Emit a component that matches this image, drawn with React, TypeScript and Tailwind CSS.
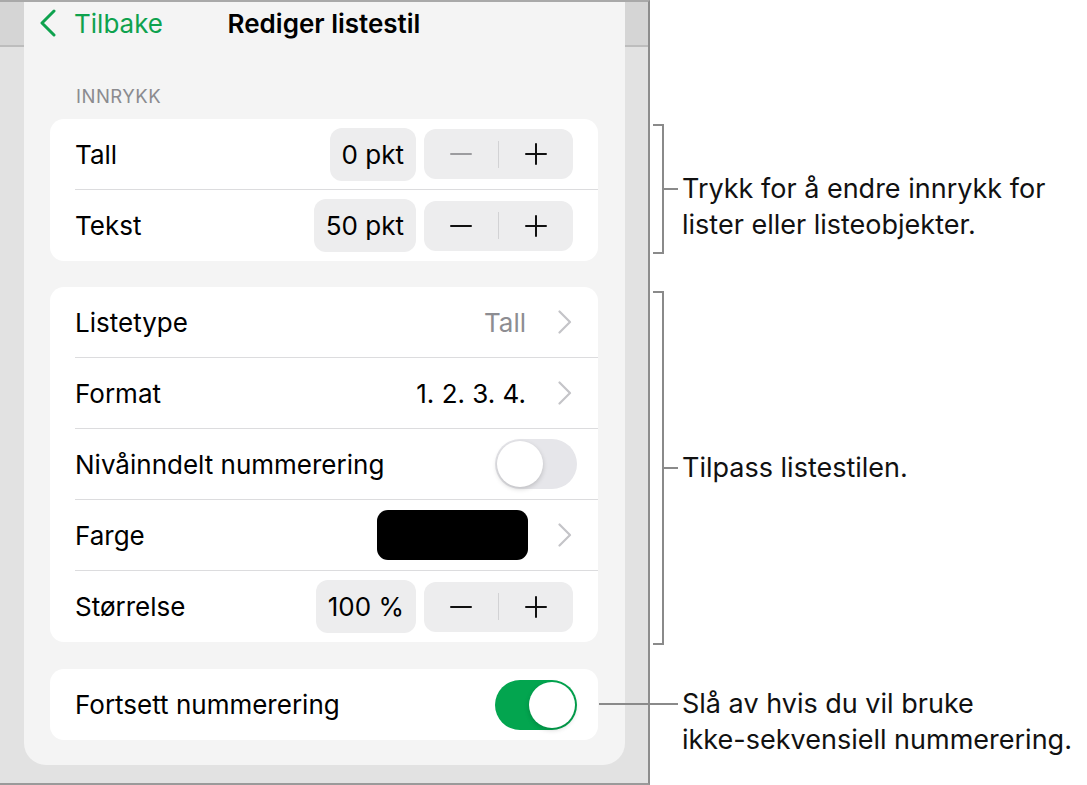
import React from "react";

const GREEN = "#0ea24e";

function Chevron() {
  return (
    <svg width="16" height="24" viewBox="0 0 16 24" className="shrink-0">
      <path d="M2.5 1.5 L13 12 L2.5 22.5" fill="none" stroke="#c4c4c8" strokeWidth="2.2" strokeLinecap="round" strokeLinejoin="round" />
    </svg>
  );
}

function Stepper({ value, minusDisabled }: { value: string; minusDisabled?: boolean }) {
  return (
    <div className="flex items-center gap-[8px]">
      <div className="flex h-[53px] items-center rounded-[12px] bg-[#ededee] px-[12px] text-[26px] text-black">
        {value}
      </div>
      <div className="flex h-[50px] w-[149px] items-center rounded-[12px] bg-[#ededee]">
        <div className="flex flex-1 items-center justify-center">
          <svg width="22" height="22" viewBox="0 0 22 22">
            <path d="M1 11 H21" stroke={minusDisabled ? "#9c9c9f" : "#111"} strokeWidth="2" strokeLinecap="round" />
          </svg>
        </div>
        <div className="h-[27px] w-px bg-[#d2d2d4]" />
        <div className="flex flex-1 items-center justify-center">
          <svg width="22" height="22" viewBox="0 0 22 22">
            <path d="M1 11 H21 M11 1 V21" stroke="#111" strokeWidth="2" strokeLinecap="round" />
          </svg>
        </div>
      </div>
    </div>
  );
}

function Toggle({ on }: { on?: boolean }) {
  return (
    <div
      className={
        on
          ? "flex h-[50px] w-[82px] items-center justify-end rounded-full bg-[#03a54f] p-[2px]"
          : "flex h-[50px] w-[82px] items-center justify-start rounded-full bg-[#e6e6ea] p-[2px]"
      }
    >
      <div className="h-[46px] w-[46px] rounded-full bg-white shadow-[0_2px_5px_rgba(0,0,0,0.18)]" />
    </div>
  );
}

function Row({ label, last, children, right = "pr-[25px]" }: { label: string; last?: boolean; children?: React.ReactNode; right?: string }) {
  return (
    <div className="pl-[25px]">
      <div
        className={
          (last ? "" : "border-b border-[#dcdcde] ") +
          "flex h-[71px] items-center justify-between " +
          right
        }
      >
        <span className="text-[26px] text-black">{label}</span>
        {children}
      </div>
    </div>
  );
}

function Card({ children }: { children: React.ReactNode }) {
  return <div className="overflow-hidden rounded-[14px] bg-white">{children}</div>;
}

export default function App() {
  return (
    <div className="flex h-[785px] w-[1087px] bg-white font-['Inter','Noto_Sans',sans-serif] text-black">
      {/* left: popover on ipad frame */}
      <div className="h-[785px] w-[650px] shrink-0 border-t-2 border-r-2 border-b-2 border-t-[#a9a9a9] border-r-[#8d8d8d] border-b-[#9a9a9a] bg-[linear-gradient(to_bottom,#d5d5d5_0px,#d5d5d5_43px,#bdbdbd_43px,#bdbdbd_45px,#e2e2e2_45px)] pl-[24px]">
        <div className="h-[763px] w-[601px] rounded-b-[22px] bg-[#f4f4f4] px-[26px] pr-[27px]">
          <div className="grid h-[42px] grid-cols-[1fr_auto_1fr] items-center">
            <div className="-ml-[12px] flex items-center gap-[16px]">
              <svg width="20" height="28" viewBox="0 0 20 28">
                <path d="M16 2 L4 14 L16 26" fill="none" stroke={GREEN} strokeWidth="3" strokeLinecap="round" strokeLinejoin="round" />
              </svg>
              <span className="text-[26px]" style={{ color: GREEN }}>
                Tilbake
              </span>
            </div>
            <div className="text-[26px] font-semibold">Rediger listestil</div>
            <div />
          </div>

          <div className="mt-[42px] mb-[13px] pl-[26px] text-[18.5px] leading-[20px] tracking-[0.5px] text-[#8b8b8f]">INNRYKK</div>

          <Card>
            <Row label="Tall">
              <Stepper value="0 pkt" minusDisabled />
            </Row>
            <Row label="Tekst" last>
              <Stepper value="50 pkt" />
            </Row>
          </Card>

          <div className="mt-[26px]">
            <Card>
              <Row label="Listetype">
                <div className="flex items-center gap-[31px]">
                  <span className="text-[26px] text-[#8d8d92]">Tall</span>
                  <Chevron />
                </div>
              </Row>
              <Row label="Format">
                <div className="flex items-center gap-[31px]">
                  <span className="text-[26px] text-black">1. 2. 3. 4.</span>
                  <Chevron />
                </div>
              </Row>
              <Row label="Nivåinndelt nummerering" right="pr-[21px]">
                <Toggle />
              </Row>
              <Row label="Farge">
                <div className="flex items-center gap-[29px]">
                  <div className="h-[50px] w-[151px] rounded-[11px] bg-black" />
                  <Chevron />
                </div>
              </Row>
              <Row label="Størrelse" last>
                <Stepper value="100 %" />
              </Row>
            </Card>
          </div>

          <div className="mt-[27px]">
            <Card>
              <Row label="Fortsett nummerering" last right="pr-[21px]">
                <Toggle on />
              </Row>
            </Card>
          </div>
        </div>
      </div>

      {/* right: callouts */}
      <div className="flex flex-1 flex-col pl-[3px] text-[27px] leading-[36px] text-[#111]">
        <div className="mt-[124px] flex h-[130px] items-start">
          <div className="h-full w-[11px] border-y-2 border-r-2 border-[#8a8a8a]" />
          <div className="mt-[64px] h-[2px] w-[14px] bg-[#8a8a8a]" />
          <div className="mt-[47px] ml-[4px] whitespace-nowrap">
            Trykk for å endre innrykk for
            <br />
            lister eller listeobjekter.
          </div>
        </div>

        <div className="mt-[37px] flex h-[354px] items-start">
          <div className="h-full w-[11px] border-y-2 border-r-2 border-[#8a8a8a]" />
          <div className="mt-[176px] h-[2px] w-[14px] bg-[#8a8a8a]" />
          <div className="mt-[159px] ml-[4px] whitespace-nowrap">Tilpass listestilen.</div>
        </div>

        <div className="mt-[41px] flex items-start">
          <div className="-ml-[54px] mt-[17px] h-[2px] w-[79px] bg-[#8a8a8a]" />
          <div className="ml-[4px] whitespace-nowrap">
            Slå av hvis du vil bruke
            <br />
            ikke-sekvensiell nummerering.
          </div>
        </div>
      </div>
    </div>
  );
}
